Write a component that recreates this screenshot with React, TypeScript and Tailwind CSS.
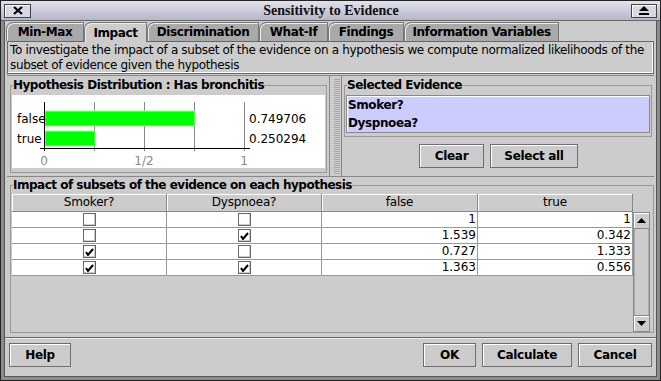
import type { ReactNode } from "react";

const tabs = [
  { label: "Min-Max", w: "w-[78px]", active: false },
  { label: "Impact", w: "w-[63px]", active: true },
  { label: "Discrimination", w: "w-[112px]", active: false },
  { label: "What-If", w: "w-[69px]", active: false },
  { label: "Findings", w: "w-[76px]", active: false },
  { label: "Information Variables", w: "w-[155px]", active: false },
];

const rows = [
  { smoker: false, dysp: false, f: "1", t: "1" },
  { smoker: false, dysp: true, f: "1.539", t: "0.342" },
  { smoker: true, dysp: false, f: "0.727", t: "1.333" },
  { smoker: true, dysp: true, f: "1.363", t: "0.556" },
];

export default function App() {
  return (
    <div className="flex h-[381px] w-[661px] flex-col overflow-hidden border border-[#222] bg-[#cccccc] font-['DejaVu_Sans',sans-serif] text-black">
      <TitleBar />

      {/* window body */}
      <div className="flex flex-1 flex-col border-x-[3px] border-b-[3px] border-[#8c8c8c]">
        <div className="flex flex-1 flex-col border-x border-b border-[#555]">
          {/* tabs */}
          <div className="flex h-[20px] items-end pl-[1px]">
            {tabs.map((t) => (
              <Tab key={t.label} {...t} />
            ))}
          </div>

          {/* description */}
          <div className="mx-[2px] h-[33px] whitespace-nowrap border border-[#666] px-[2px] pt-[1px] text-[12px] leading-[15px] tracking-[-0.35px] shadow-[inset_-1px_-1px_0_#fff]">
            To investigate the impact of a subset of the evidence on a hypothesis we compute normalized likelihoods of the
            <br />
            subset of evidence given the hypothesis
          </div>

          {/* split pane */}
          <div className="mx-[2px] mt-[1px] flex h-[101px] border-t border-[#888]">
            <div className="flex w-[323px] border-r border-[#888] px-[3px] pt-[2px]">
              <Titled title="Hypothesis Distribution : Has bronchitis" className="h-[95px] w-full">
                <div className="mt-[3px] h-[73px] bg-white">
                  <Chart />
                </div>
              </Titled>
            </div>
            <div className="w-[11px] py-[2px] pl-[4px]">
              <div className="h-full w-[6px] bg-[repeating-linear-gradient(0deg,#999_0px,#999_1px,transparent_1px,transparent_2px)] opacity-70" />
            </div>
            <div className="flex flex-1 border-l border-[#888] px-[2px] pt-[2px]">
              <div className="flex w-full flex-col">
                <Titled title="Selected Evidence" className="h-[59px] w-full">
                  <div className="mt-[3px] h-[38px] border border-[#888] bg-[#ccccff] pl-[1px] text-[12px] font-bold leading-[18px] tracking-[-0.4px] shadow-[inset_1px_1px_0_#fff]">
                    <div>Smoker?</div>
                    <div>Dyspnoea?</div>
                  </div>
                </Titled>
                <div className="mt-[7px] flex justify-center gap-[6px] pl-[1px]">
                  <Btn className="w-[65px]">Clear</Btn>
                  <Btn className="w-[88px]">Select all</Btn>
                </div>
              </div>
            </div>
          </div>

          {/* impact table */}
          <div className="mx-[2px] border-t border-[#888] px-[3px] pt-[1px]">
            <Titled title="Impact of subsets of the evidence on each hypothesis" className="h-[155px] w-full">
              <div className="mt-[2px] flex pr-[2px]">
                <div className="w-[621px]">
                  <div className="grid h-[18px] grid-cols-[155px_155px_156px_155px] text-[12px] leading-[16px] tracking-[-0.2px]">
                    {["Smoker?", "Dyspnoea?", "false", "true"].map((h) => (
                      <div
                        key={h}
                        className="border-r border-b border-[#888] text-center shadow-[inset_1px_1px_0_#fff]"
                      >
                        {h}
                      </div>
                    ))}
                  </div>
                  {rows.map((r, i) => (
                    <div
                      key={i}
                      className="grid h-[16px] grid-cols-[155px_155px_156px_155px] bg-white text-[12px] leading-[15px]"
                    >
                      <div className="flex items-center justify-center border-r border-b border-[#999]">
                        <Check on={r.smoker} />
                      </div>
                      <div className="flex items-center justify-center border-r border-b border-[#999]">
                        <Check on={r.dysp} />
                      </div>
                      <div className="border-r border-b border-[#999] pr-[1px] text-right">{r.f}</div>
                      <div className="border-r border-b border-[#999] pr-[1px] text-right">{r.t}</div>
                    </div>
                  ))}
                </div>
                <Scrollbar />
              </div>
            </Titled>
          </div>

          {/* buttons */}
          <div className="mt-[4px] flex flex-1 items-start border-t border-[#666] px-[4px] pt-[5px] shadow-[inset_0_1px_0_#eee]">
            <Btn className="w-[62px]">Help</Btn>
            <div className="flex-1" />
            <Btn className="w-[53px]">OK</Btn>
            <Btn className="ml-[6px] w-[90px]">Calculate</Btn>
            <Btn className="ml-[6px] w-[74px]">Cancel</Btn>
          </div>
        </div>
      </div>
    </div>
  );
}

function TitleBar() {
  return (
    <div className="flex h-[20px] items-center border-b border-[#666] bg-gradient-to-b from-[#e2e2ee] to-[#b6b6c8] px-[3px]">
      <div className="flex h-[14px] w-[27px] items-center justify-center border border-[#444] bg-[#d8d8e4] shadow-[inset_1px_1px_0_#fff]">
        <svg width="10" height="9" viewBox="0 0 10 9">
          <path d="M1 1 L9 8 M9 1 L1 8" stroke="#000" strokeWidth="2.2" />
        </svg>
      </div>
      <div className="flex-1 text-center font-['Liberation_Serif',serif] text-[14px] font-bold leading-[18px] text-[#111]">
        Sensitivity to Evidence
      </div>
      <div className="flex h-[14px] w-[26px] items-center justify-center border border-[#444] bg-[#d8d8e4] shadow-[inset_1px_1px_0_#fff]">
        <svg width="12" height="9" viewBox="0 0 12 9">
          <path d="M6 0 L11 5 L1 5 Z" fill="#000" />
          <rect x="1" y="7" width="10" height="2" fill="#000" />
        </svg>
      </div>
    </div>
  );
}

function Tab({ label, w, active }: { label: string; w: string; active: boolean }) {
  return (
    <div
      className={`flex ${w} items-center justify-center rounded-tl-[7px] border-t border-l border-r border-[#777] text-[12px] font-bold tracking-[-0.4px] shadow-[inset_1px_1px_0_#eee] ${
        active ? "relative z-10 -mb-[1px] h-[20px] bg-[#cccccc]" : "h-[19px] bg-[#a9a9a9]"
      }`}
    >
      {label}
    </div>
  );
}

function Titled({
  title,
  className,
  children,
}: {
  title: string;
  className?: string;
  children: ReactNode;
}) {
  return (
    <fieldset className={`border border-[#999] px-[1px] pb-[1px] ${className ?? ""}`}>
      <legend className="ml-[1px] px-0 text-[12px] font-bold leading-[14px] tracking-[-0.5px]">{title}</legend>
      {children}
    </fieldset>
  );
}

function Btn({ className, children }: { className?: string; children: ReactNode }) {
  return (
    <div
      className={`flex h-[24px] items-center justify-center border border-[#6e6e6e] bg-[#cccccc] text-[12px] font-bold tracking-[-0.3px] shadow-[inset_1px_1px_0_#fff] ${className ?? ""}`}
    >
      {children}
    </div>
  );
}

function Check({ on }: { on: boolean }) {
  return (
    <div className="flex h-[13px] w-[13px] items-center justify-center border border-[#666] bg-white shadow-[inset_-1px_-1px_0_#ccc]">
      {on && (
        <svg width="9" height="9" viewBox="0 0 9 9">
          <path d="M1 5 L3 8 L8 2" stroke="#000" strokeWidth="2" fill="none" />
        </svg>
      )}
    </div>
  );
}

function Scrollbar() {
  return (
    <div className="mt-[18px] flex h-[120px] w-[17px] flex-col border border-[#888] bg-[#cccccc]">
      <div className="flex h-[16px] items-center justify-center border-b border-[#888] shadow-[inset_1px_1px_0_#fff]">
        <svg width="9" height="5" viewBox="0 0 9 5">
          <path d="M4.5 0 L9 5 L0 5 Z" fill="#000" />
        </svg>
      </div>
      <div className="flex-1 border-x border-[#aaa]" />
      <div className="flex h-[16px] items-center justify-center border-t border-[#888] shadow-[inset_1px_1px_0_#fff]">
        <svg width="9" height="5" viewBox="0 0 9 5">
          <path d="M0 0 L9 0 L4.5 5 Z" fill="#000" />
        </svg>
      </div>
    </div>
  );
}

function Chart() {
  const x0 = 32;
  const scale = 200;
  const data = [
    { label: "false", v: 0.749706, y: 16 },
    { label: "true", v: 0.250294, y: 36 },
  ];
  return (
    <svg width="313" height="73" viewBox="0 0 313 73" fontFamily="DejaVu Sans, sans-serif" fontSize="12">
      {[0.25, 0.5, 0.75, 1].map((g) => (
        <line key={g} x1={x0 + g * scale + 0.5} x2={x0 + g * scale + 0.5} y1={7} y2={56} stroke="#888" />
      ))}
      {data.map((d) => (
        <g key={d.label}>
          <rect x={x0 + 1} y={d.y} width={d.v * scale} height={15} fill="#00ff00" stroke="#9fff9f" strokeWidth="1" />
          <text x={5} y={d.y + 12}>{d.label}</text>
          <text x={237} y={d.y + 12}>{d.v.toFixed(6)}</text>
        </g>
      ))}
      <line x1={x0 + 0.5} x2={x0 + 0.5} y1={7} y2={56} stroke="#000" />
      <line x1={28} x2={238} y1={53.5} y2={53.5} stroke="#000" />
      <text x={x0} y={70} textAnchor="middle" fill="#888">0</text>
      <text x={x0 + 100} y={70} textAnchor="middle" fill="#888">1/2</text>
      <text x={x0 + 200} y={70} textAnchor="middle" fill="#888">1</text>
    </svg>
  );
}
